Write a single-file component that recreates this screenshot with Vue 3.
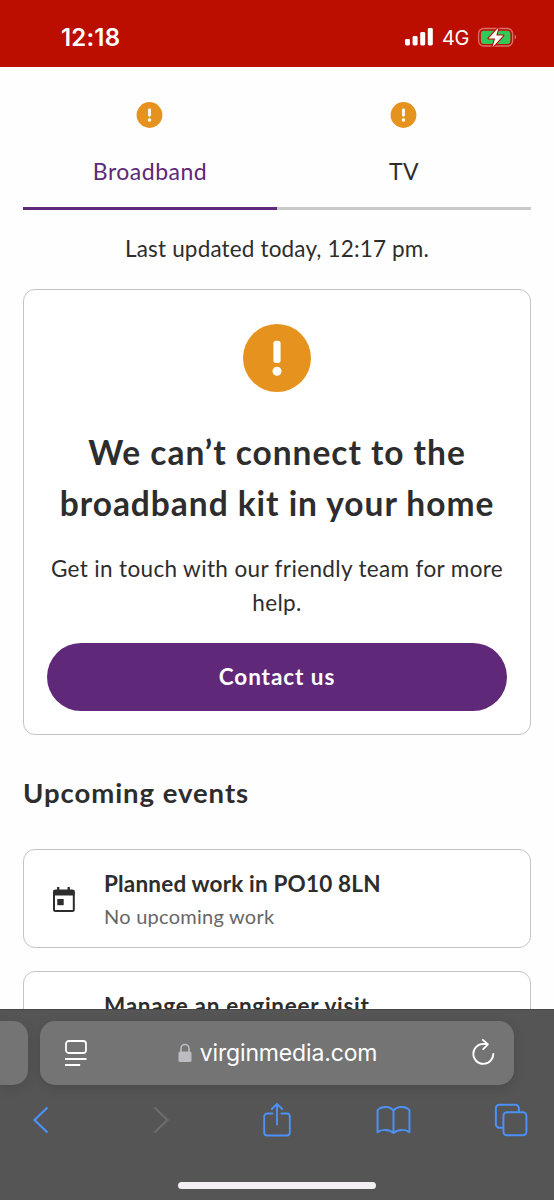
<script setup>
const tabs = [
  { label: 'Broadband', active: true },
  { label: 'TV', active: false },
]
</script>

<template>
  <div class="phone">
    <header class="status">
      <span class="time">12:18</span>
      <div class="indicators">
        <svg class="signal" width="28" height="18" viewBox="0 0 28 18" fill="#fff">
          <rect x="0" y="11" width="5" height="6.500" rx="1.400" />
          <rect x="7.600" y="8" width="5" height="9.500" rx="1.400" />
          <rect x="15.200" y="4" width="5" height="13.500" rx="1.400" />
          <rect x="22.800" y="0" width="5" height="17.500" rx="1.400" />
        </svg>
        <span class="network">4G</span>
        <svg class="battery" width="40" height="22" viewBox="0 0 40 22">
          <rect x="1.600" y="2.500" width="34" height="17.500" rx="5" fill="none" stroke="#dc7068" stroke-width="1.300" />
          <rect x="3.900" y="4.700" width="29.500" height="13.200" rx="3" fill="#34c759" />
          <path d="M37.600 8.500c2 .8 2 4.200 0 5z" fill="#dc7068" />
          <path d="M21.500 1.500 11.500 12.500h6.600l-2.600 8.800L26.300 9.500h-7z" fill="#fff" stroke="#bb0e00" stroke-width="2.200" stroke-linejoin="round" paint-order="stroke" />
        </svg>
      </div>
    </header>

    <main class="page">
      <nav class="tabs">
        <a v-for="tab in tabs" :key="tab.label" class="tab" :class="{ active: tab.active }">
          <svg width="26" height="26" viewBox="0 0 26 26">
            <circle cx="12.500" cy="13" r="12.900" fill="#e5931e" />
            <rect x="11.100" y="6.600" width="2.800" height="8" rx="1.100" fill="#fff" />
            <circle cx="12.500" cy="17.900" r="1.750" fill="#fff" />
          </svg>
          <span class="tab-label">{{ tab.label }}</span>
        </a>
      </nav>

      <p class="updated">Last updated today, 12:17 pm.</p>

      <section class="card alert">
        <svg class="alert-icon" width="68" height="68" viewBox="0 0 68 68">
          <circle cx="34" cy="34" r="34" fill="#e5931e" />
          <rect x="30.400" y="16.800" width="7.200" height="22.200" rx="2.800" fill="#fff" />
          <circle cx="34" cy="47.200" r="4.500" fill="#fff" />
        </svg>
        <h1>We can’t connect to the<br>broadband kit in your home</h1>
        <p class="message">Get in touch with our friendly team for more help.</p>
        <button class="contact">Contact us</button>
      </section>

      <h2>Upcoming events</h2>

      <section class="card event">
        <svg class="calendar" width="24" height="27" viewBox="0 0 24 27">
          <path d="M6.200 1v4M16.700 1v4" stroke="#2d2d2d" stroke-width="2.300" />
          <rect x="2" y="4.600" width="19.800" height="20.400" rx="1.500" fill="none" stroke="#2d2d2d" stroke-width="2" />
          <path d="M1.500 4.500h21v5h-21z" fill="#2d2d2d" />
          <rect x="5.300" y="13" width="6.400" height="6.200" fill="#2d2d2d" />
        </svg>
        <div>
          <h3>Planned work in PO10 8LN</h3>
          <p class="detail">No upcoming work</p>
        </div>
      </section>

      <section class="card event next">
        <h3 class="visit">Manage an engineer visit</h3>
      </section>
    </main>

    <footer class="browser">
      <div class="address-row">
        <div class="neighbour"></div>
        <div class="address">
          <svg class="reader" width="24" height="28" viewBox="0 0 24 28" fill="none" stroke="#fff" stroke-width="1.800">
            <rect x="2" y="2" width="20" height="12" rx="2.800" />
            <path d="M1 20h21.500M1 26h15.200" />
          </svg>
          <div class="site">
            <svg width="14" height="20" viewBox="0 0 14 20">
              <path d="M3 9V5.500a4 4 0 0 1 8 0V9" fill="none" stroke="#bdbcc2" stroke-width="1.600" />
              <rect x=".5" y="8.500" width="13" height="10.500" rx="1.600" fill="#bdbcc2" />
            </svg>
            <span class="host">virginmedia.com</span>
          </div>
          <svg class="reload" width="24" height="28" viewBox="0 0 24 28" fill="none" stroke="#fff" stroke-width="1.800" stroke-linecap="round" stroke-linejoin="round">
            <path d="M22.300 14.800A10 10 0 1 1 12.300 4.900l4.600.3M11.800.900l5.100 4.400-4.700 4.900" />
          </svg>
        </div>
      </div>
      <div class="tools">
        <svg class="back" width="18" height="28" viewBox="0 0 18 28" fill="none" stroke="#4b91f7" stroke-width="2.200"><path d="M15.500 1.500 2.500 14l13 12.500" /></svg>
        <svg class="forward" width="18" height="28" viewBox="0 0 18 28" fill="none" stroke="#6d6d6d" stroke-width="2.200"><path d="m2.500 1.500 13 12.500-13 12.500" /></svg>
        <svg class="share" width="28" height="36" viewBox="0 0 28 36" fill="none" stroke="#4b91f7" stroke-width="1.900" stroke-linecap="round" stroke-linejoin="round">
          <path d="M9.500 11.500H4.200a3 3 0 0 0-3 3v16a3 3 0 0 0 3 3h19.600a3 3 0 0 0 3-3v-16a3 3 0 0 0-3-3h-5.300M14 22.500V1.800M8.800 7 14 1.800 19.200 7" />
        </svg>
        <svg class="book" width="35" height="29" viewBox="0 0 36 30" fill="none" stroke="#4b91f7" stroke-width="2" stroke-linejoin="round">
          <path d="M18 4.800C15 -.1 5.800-.3 1.500 4.200v22.900c4-3.400 12.500-3.200 16.500.9 4-4.100 12.500-4.300 16.500-.9V4.200C30.200-.3 21-.1 18 4.800zM18 4.800v23.200" />
        </svg>
        <svg class="windows" width="34" height="34" viewBox="0 0 34 34" fill="none" stroke="#4b91f7" stroke-width="2">
          <rect x="9.400" y="9.300" width="23" height="23" rx="3.500" />
          <path d="M9.400 24.800H5.400a3.500 3.500 0 0 1-3.500-3.500V5.300a3.500 3.500 0 0 1 3.500-3.500h16a3.500 3.500 0 0 1 3.500 3.500v4" />
        </svg>
      </div>
      <div class="home-bar"></div>
    </footer>
  </div>
</template>

<style>
body { margin: 0; background: #fefefe; }
</style>

<style scoped>
* { box-sizing: border-box; }
svg { display: block; flex: none; overflow: visible; }
h1, h2, h3, p { margin: 0; }

.phone {
  width: 554px;
  height: 1200px;
  overflow: hidden;
  display: flex;
  flex-direction: column;
  background: #fefefe;
  color: #2d2d2d;
  font-family: Lato, "Liberation Sans", sans-serif;
}

.status {
  flex: none;
  height: 67px;
  padding: 7px 37px 0 61px;
  display: flex;
  align-items: center;
  justify-content: space-between;
  background: #bb0e00;
  color: #fff;
  font-family: Inter, "Liberation Sans", sans-serif;
}
.time { padding-top: 2px; font-size: 24px; font-weight: 600; line-height: 30px; letter-spacing: 0.2px; }
.indicators { display: flex; align-items: center; }
.network { width: 35px; margin-left: 9px; padding-top: 2px; font-size: 20px; line-height: 30px; letter-spacing: -0.3px; }

.page { flex: 1; min-height: 0; overflow: hidden; padding: 0 23px; }

.tabs { display: flex; height: 143px; }
.tab {
  flex: 1;
  display: flex;
  flex-direction: column;
  align-items: center;
  padding-top: 35px;
  border-bottom: 3px solid #c9c9c9;
}
.tab.active { color: #5f2878; border-color: #5f2878; }
.tab-label { margin-top: 28px; font-size: 23px; line-height: 30px; letter-spacing: 0.5px; }

.updated { margin-top: 24px; font-size: 22.500px; line-height: 30px; letter-spacing: 0.16px; text-align: center; }

.card { border: 1.500px solid #c4c4c4; border-radius: 12px; background: #fff; }
.alert { height: 446px; margin-top: 25px; padding: 34px 23px 23px; text-align: center; }
.alert-icon { margin: 0 auto; }
h1 { margin-top: 35px; font-size: 33.500px; font-weight: 700; line-height: 51px; letter-spacing: 0.97px; white-space: nowrap; }
.message { margin: 23px -5px 0; font-size: 22.500px; line-height: 34px; letter-spacing: 0.36px; }
.contact {
  display: block;
  width: 100%;
  height: 68px;
  margin-top: 23px;
  padding: 0 0 2px;
  border: 0;
  border-radius: 34px;
  background: #5f2878;
  color: #fff;
  font: 700 22.500px Lato, "Liberation Sans", sans-serif;
  letter-spacing: 0.95px;
}

h2 { margin-top: 38px; font-size: 27.500px; font-weight: 700; line-height: 40px; letter-spacing: 0.95px; }

.event { display: flex; align-items: center; height: 99px; margin-top: 36px; padding: 0 0 0 28px; }
.calendar { margin: 2px 28px 0 0; }
h3 { font-size: 22.500px; font-weight: 700; line-height: 34px; letter-spacing: 0.18px; white-space: nowrap; }
.detail { color: #666; font-size: 20px; line-height: 30px; letter-spacing: 0.25px; }
.event.next { margin-top: 23px; align-items: flex-start; padding: 17px 0 0 80px; }
.visit { letter-spacing: 0.7px; }

.browser { flex: none; height: 191px; background: #555; border-top: 1px solid #484848; }
.address-row { display: flex; gap: 12px; padding-top: 11px; }
.neighbour { width: 28px; height: 64px; border-radius: 0 15px 15px 0; background: #747474; box-shadow: 0 3px 12px rgba(0, 0, 0, 0.12); }
.address {
  display: flex;
  align-items: center;
  justify-content: space-between;
  width: 474px;
  height: 64px;
  padding: 0 19px 0 24px;
  border-radius: 15px;
  background: #747474;
  box-shadow: 0 3px 12px rgba(0, 0, 0, 0.14);
  color: #fff;
  font-family: Inter, "Liberation Sans", sans-serif;
}
.site { display: flex; align-items: center; gap: 8px; margin-right: 4px; }
.host { font-size: 23px; line-height: 30px; letter-spacing: -0.15px; }
.tools { display: flex; align-items: center; height: 36px; margin-top: 17px; padding-left: 32px; }
.forward { margin-left: 102px; }
.share { margin-left: 93px; }
.book { margin-left: 85px; }
.windows { margin-left: 83px; }
.home-bar { width: 198px; height: 7px; margin: 44px auto 0; border-radius: 4px; background: #f1eff1; }
</style>
